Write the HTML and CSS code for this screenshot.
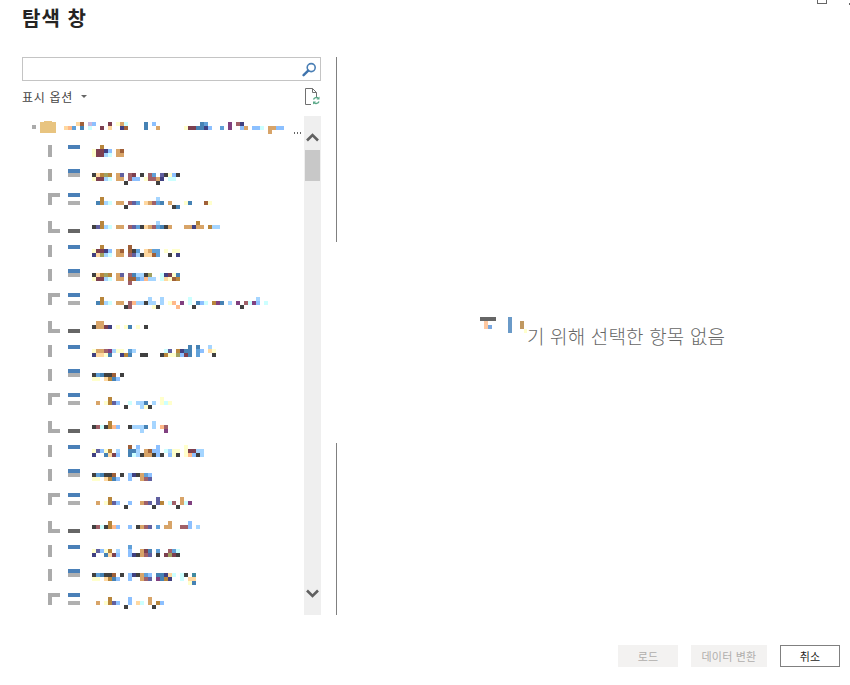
FILE: index.html
```html
<!DOCTYPE html>
<html lang="ko">
<head>
  <meta charset="UTF-8">
  <title>탐색 창</title>
  <link rel="stylesheet" href="styles.css">
</head>
<body>
  <div class="window-controls">
    <span class="restore-box"></span>
    <span class="close-dot"></span>
  </div>

  <div class="dialog">
    <h1 class="title">탐색 창</h1>

    <div class="main">
      <div class="nav-pane">
        <div class="search-box">
          <svg class="search-icon" width="15" height="15" viewBox="0 0 15 15">
            <circle cx="9.2" cy="5.6" r="4" fill="none" stroke="#4a7fb5" stroke-width="1.6"/>
            <path d="M6.2 8.6 L1.6 13.2" stroke="#3f74ad" stroke-width="2.4" stroke-linecap="round"/>
          </svg>
        </div>

        <div class="options-row">
          <span class="options-label">표시 옵션</span>
          <span class="caret"></span>
          <svg class="refresh-icon" width="15" height="17" viewBox="0 0 15 17">
            <path d="M0.5 0.5 H7.5 L11.5 4.5 V9 M7.5 0.5 V4.5 H11.5 M6 16.5 H0.5 V0.5" fill="none" stroke="#707070"/>
            <path d="M8.5 11.5 A3 3 0 0 1 13.5 10.5 M14 13.5 A3 3 0 0 1 9 14.5" fill="none" stroke="#5aa888" stroke-width="1.4"/>
            <path d="M14.5 8.5 V11.5 H11.5 Z M8 16.5 V13.5 H11 Z" fill="#5aa888"/>
          </svg>
        </div>

        <div class="tree-wrap">
          <svg id="tree" class="tree" width="282" height="499" viewBox="22 116 282 499"></svg>
          <div class="scrollbar">
            <svg class="chevron chevron-up" width="15" height="9" viewBox="0 0 15 9">
              <path d="M2 7.5 L7.5 2 L13 7.5" fill="none" stroke="#606060" stroke-width="2.6"/>
            </svg>
            <div class="thumb"></div>
            <svg class="chevron chevron-down" width="15" height="9" viewBox="0 0 15 9">
              <path d="M2 1.5 L7.5 7 L13 1.5" fill="none" stroke="#606060" stroke-width="2.6"/>
            </svg>
          </div>
        </div>
      </div>

      <div class="divider">
        <span class="divider-line divider-top"></span>
        <span class="divider-line divider-bottom"></span>
      </div>

      <div class="preview-pane">
        <div class="empty-message">
          <svg class="empty-blur" width="47" height="16" viewBox="0 0 47 16">
            <rect x="0" y="0" width="16" height="4" fill="#666666"/>
            <rect x="4" y="4" width="4" height="8" fill="#ffc8a0"/>
            <rect x="8" y="8" width="4" height="4" fill="#7aa8e0"/>
            <rect x="28" y="0" width="4" height="16" fill="#6a9ac8"/>
            <rect x="40" y="4" width="4" height="8" fill="#c09860"/>
            <rect x="44" y="12" width="3" height="4" fill="#ffffcc"/>
          </svg>
          <span class="empty-text">기 위해 선택한 항목 없음</span>
        </div>
      </div>
    </div>

    <div class="footer">
      <button class="btn btn-load" disabled>로드</button>
      <button class="btn btn-transform" disabled>데이터 변환</button>
      <button class="btn btn-cancel">취소</button>
    </div>
  </div>

  <script src="tree.js"></script>
</body>
</html>
```

FILE: styles.css
```css
html, body {
  margin: 0;
  padding: 0;
}
body {
  width: 850px;
  height: 685px;
  overflow: hidden;
  background-color: #fff;
  font-family: "Noto Sans CJK KR", "Noto Sans", sans-serif;
  color: #252423;
}
.window-controls {
  position: absolute;
  top: 0;
  right: 0;
  width: 33px;
  height: 5px;
}
.restore-box {
  position: absolute;
  left: 0;
  top: -6px;
  width: 8px;
  height: 8px;
  border: 1px solid #666;
}
.close-dot {
  position: absolute;
  right: 0;
  top: 3px;
  width: 1px;
  height: 2px;
  background-color: #666;
}
.dialog {
  display: flex;
  flex-direction: column;
  height: 685px;
  box-sizing: border-box;
  padding: 0 10px 18px 22px;
}
.title {
  margin: 0;
  height: 57px;
  padding-top: 5px;
  box-sizing: border-box;
  font-size: 20px;
  line-height: 26px;
  font-weight: 700;
  letter-spacing: 1px;
}
.main {
  display: flex;
  height: 558px;
}
.nav-pane {
  display: flex;
  flex-direction: column;
  width: 299px;
}
.search-box {
  display: flex;
  align-items: center;
  justify-content: flex-end;
  height: 24px;
  box-sizing: border-box;
  border: 1px solid #c4c4c4;
  padding-right: 3px;
}
.options-row {
  display: flex;
  align-items: center;
  height: 35px;
  box-sizing: border-box;
  padding-bottom: 4px;
  font-size: 12px;
  color: #444;
}
.options-label {
  letter-spacing: 0.7px;
}
.caret {
  margin: 0 0 1px 8px;
  border-left: 3px solid transparent;
  border-right: 3px solid transparent;
  border-top: 3px solid #666;
}
.refresh-icon {
  margin-left: auto;
  margin-right: 1px;
}
.tree-wrap {
  display: flex;
  height: 499px;
}
.tree {
  display: block;
  flex: none;
}
.scrollbar {
  display: flex;
  flex-direction: column;
  align-items: center;
  width: 17px;
  background-color: #efefef;
}
.chevron-up {
  margin-top: 17px;
}
.thumb {
  width: 15px;
  height: 31px;
  margin-top: 8px;
  background-color: #c8c8c8;
}
.chevron-down {
  margin-top: auto;
  margin-bottom: 17px;
}
.divider {
  display: flex;
  flex-direction: column;
  justify-content: space-between;
  width: 1px;
  margin-left: 15px;
}
.divider-line {
  display: block;
  background-color: #808080;
}
.divider-top {
  height: 185px;
}
.divider-bottom {
  height: 172px;
}
.preview-pane {
  display: flex;
  flex: 1;
  padding: 260px 0 0 143px;
}
.empty-message {
  display: flex;
  align-items: flex-start;
  height: 32px;
}
.empty-blur {
  display: block;
}
.empty-text {
  margin-top: 6px;
  font-size: 19px;
  line-height: 26px;
  letter-spacing: 0.15px;
  font-weight: 300;
  color: #666;
  white-space: nowrap;
}
.footer {
  display: flex;
  justify-content: flex-end;
  gap: 13px;
  margin-top: 30px;
}
.btn {
  height: 22px;
  padding: 0;
  box-sizing: border-box;
  border: none;
  font-family: inherit;
  font-size: 11px;
  line-height: 20px;
  letter-spacing: 0.2px;
}
.btn-load {
  width: 60px;
  background-color: #f3f2f1;
  color: #b0aeac;
}
.btn-transform {
  width: 76px;
  background-color: #f3f2f1;
  color: #b0aeac;
}
.btn-cancel {
  width: 60px;
  background-color: #fff;
  border: 1px solid #808080;
  color: #252423;
}
```

FILE: tree.js
```js
// The item names are blurred to a 4px mosaic in the screenshot, so the tree is drawn as cells
const colors = {
  d: '#404040', b: '#4682b4', l: '#a5d5ff', p: '#8cc0ff', c: '#ccffff', y: '#ffffcc',
  o: '#d8a468', O: '#b8863c', m: '#7c3f4f', n: '#404080', v: '#804080', r: '#a06068',
  s: '#ffd8a0', t: '#ffb888', k: '#6060a0', g: '#a0a060', e: '#60a0d8', B: '#a06038',
  T: '#408aa0', L: '#c8b8e0'
};

// [icon type, icon top, first mosaic line y, lines]
const rows = [
  ['A', 145, 145, ['..O', 'ymmnp.oB', 'ymmlc.oo']],
  ['B', 169, 173, ['dsOgO.ok.rm.d.re.kdypd', 'ymmlc.oo.rpp.yrron.cc', '........d.......d']],
  ['C', 193, 197, ['..O.............l', '.bOlc.oo.rke.soreb.o...yb...By', '........d...........db']],
  ['D', 221, 221, ['..O.............l.........O', 'dkOlc.oo.rkedsorebdo...oonoo.Oll']],
  ['A', 245, 245, ['..O......B', 'ymmnp.oB.Bde.soee.y.yy', 'nsglc.oo.rkldssBe..d.n']],
  ['B', 269, 273, ['dsOgO.ok.rblldg..cnmyb', 'ymmlc.oo.BBeptll.csyBO', '.........r']],
  ['C', 293, 297, ['..O...........l..l......c................l', '.bOlc.oo.rtlldll.l.yt.v.c.bpc.Ovb.l.v.rcvp.c', '........dr.....yd....t...d...........d']],
  ['D', 321, 321, ['.oo', 'doomn.y.yb.y.d']],
  ['A', 345, 345, ['........................b.b..l', 'yoorvlyy.el.......ck.Onbb.ep.sy', 'nssyb..nOb..dd...dOyygpmb.e...d']],
  ['B', 369, 373, ['debddB.d', 'yy.sObp']],
  ['C', 393, 397, ['....O............y', '.o.yOkp..c.llb.l.ycy', '........d...lyd']],
  ['D', 421, 421, ['....O..........l', 'drcdOtp..dlllb.l.tr', '............l.....v']],
  ['A', 445, 445, ['.........B.p....p......y', 'ykpyO.l..bbl.oBpp.clyy.ymmll', 'n..bsmp..bcldoodpd.pyd.ytpdl']],
  ['B', 469, 473, ['debddB.d.pndoep', 'yy.sObp..p..ork']],
  ['C', 493, 497, ['....O...........k.....o', '.o.yOkp..p..ork.kO.cr.ocv', '........d......d.....d']],
  ['D', 521, 521, ['....O..............o....p', 'drcdOtp..p.dork.e.oo..rrp.l']],
  ['A', 545, 545, ['.........e', 'ykpyO.l..p..omb.e..rec', 'n..bsmp..pndork.d.mgmd']],
  ['B', 569, 573, ['debddB.d.pndoep.bbnsc.cd.T', 'yy.sObp..p..ork.vbOn..c.ss', '........................yb']],
  ['C', 593, 597, ['....O....p....o', '.o.yOkp..p.sc.o.Op', '........d......d']]
];

const tree = document.getElementById('tree');

function rect(x, y, w, h, fill) {
  const r = document.createElementNS('http://www.w3.org/2000/svg', 'rect');
  r.setAttribute('x', x);
  r.setAttribute('y', y);
  r.setAttribute('width', w);
  r.setAttribute('height', h);
  r.setAttribute('fill', fill);
  tree.appendChild(r);
}

function drawMosaic(x, y, lines) {
  lines.forEach((line, i) => {
    [...line].forEach((ch, j) => {
      if (colors[ch]) rect(x + j * 4, y + i * 4, 4, 4, colors[ch]);
    });
  });
}

function drawIcon(type, top) {
  const grey = '#ababab';
  const blue = '#4a80b8';
  if (type === 'A') {
    rect(48, top, 4, 12, grey);
    rect(68, top, 12, 4, blue);
  } else if (type === 'B') {
    rect(48, top, 4, 12, grey);
    rect(68, top, 12, 4, blue);
    rect(68, top + 4, 12, 4, '#b0b0b0');
  } else if (type === 'C') {
    rect(48, top, 4, 12, grey);
    rect(48, top, 12, 4, grey);
    rect(68, top, 12, 4, blue);
    rect(68, top + 8, 12, 4, '#b0b0b0');
  } else {
    rect(48, top, 4, 12, grey);
    rect(48, top + 8, 12, 4, grey);
    rect(68, top + 8, 12, 4, '#666666');
  }
}

// root folder row
rect(32, 125, 4, 4, '#ababab');
rect(40, 122, 16, 11, '#e8c480');
rect(44, 121, 8, 1, '#e8c480');
drawMosaic(64, 122, [
  '...sB.Lp...m.yoc....b.p...........be.....v.rn',
  'ste.b.c..m.s..nB....b..o......ymmbbnp..e.v..po.ppc.oopp',
  '...................................................o'
]);
rect(294, 132, 1, 2, '#666666');
rect(297, 132, 1, 2, '#666666');
rect(300, 132, 1, 2, '#666666');

rows.forEach(([type, top, y, lines]) => {
  drawIcon(type, top);
  drawMosaic(92, y, lines);
});
```
